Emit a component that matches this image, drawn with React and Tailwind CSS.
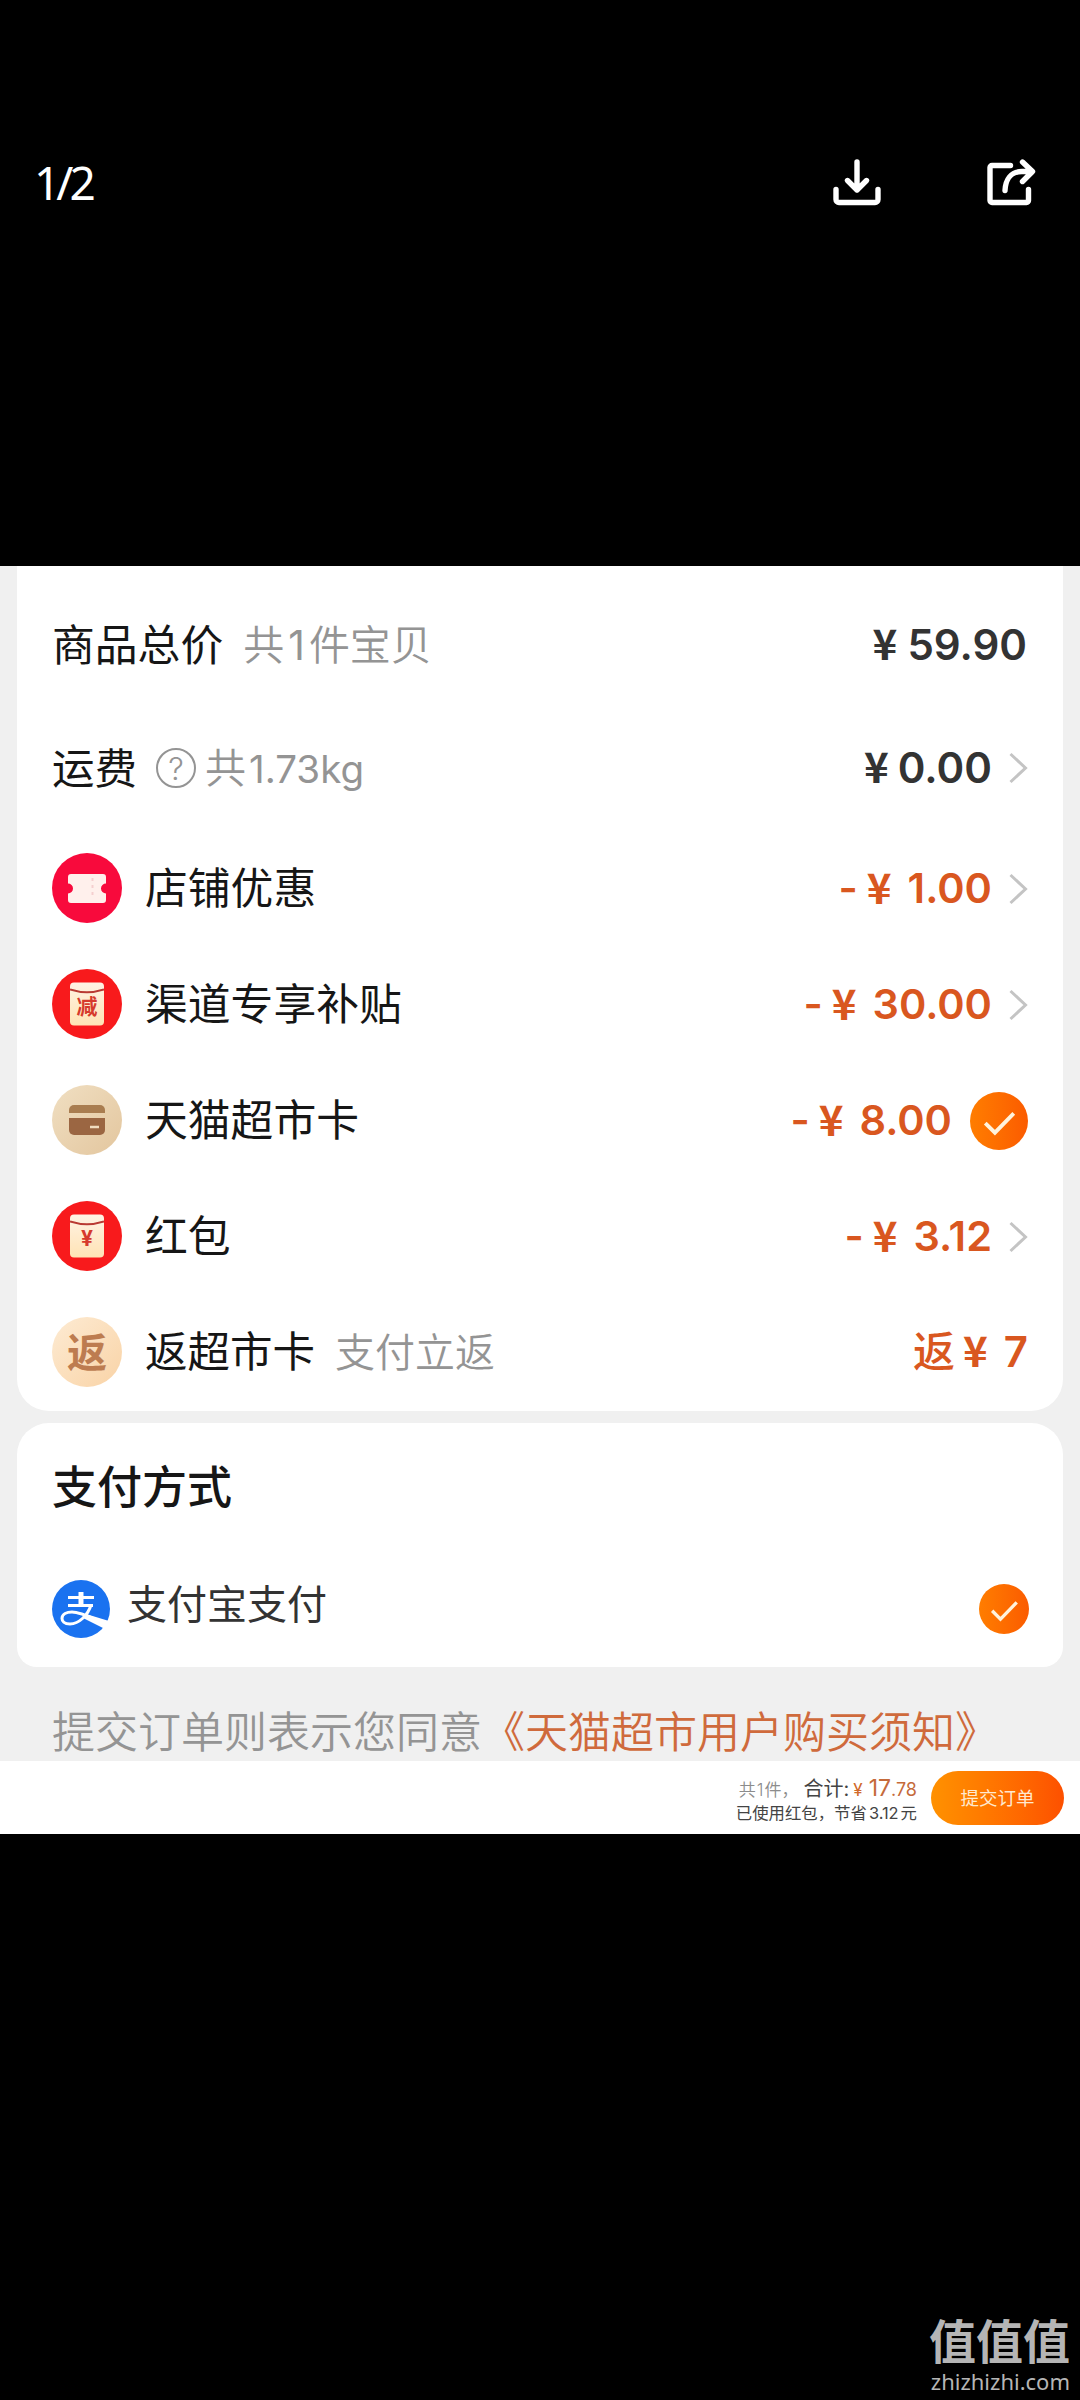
import clsx from 'clsx';

const discounts = [
  { label: '店铺优惠', icon: 'coupon', amount: '1.00', end: 'arrow' },
  { label: '渠道专享补贴', icon: 'subsidy', amount: '30.00', end: 'arrow' },
  { label: '天猫超市卡', icon: 'card', amount: '8.00', end: 'check' },
  { label: '红包', icon: 'redpack', amount: '3.12', end: 'arrow' },
];

function DownloadIcon() {
  return (
    <svg className="h-[56px] w-[56px]" viewBox="0 0 56 56" fill="none" stroke="white" strokeWidth="5.4" strokeLinecap="round" strokeLinejoin="round">
      <path d="M28 9V37M18.5 27.5L28 37l9.5-9.5M7 36.500v10a3 3 0 0 0 3 3h36a3 3 0 0 0 3-3v-10" />
    </svg>
  );
}

function ShareIcon() {
  return (
    <svg className="h-[56px] w-[56px]" viewBox="0 0 56 56" fill="none" stroke="white" strokeWidth="5.4" strokeLinecap="round" strokeLinejoin="round">
      <path d="M27.500 12.500H9a2 2 0 0 0-2 2V47.500a2 2 0 0 0 2 2H43.500a2 2 0 0 0 2-2V36.500" />
      <path d="M22 37.500c.5-11 6-19 17-19h8M39.500 9L49.500 18.500 39.500 28.500" />
    </svg>
  );
}

function Arrow() {
  return (
    <svg className="ml-[16px] h-[32px] w-[20px]" viewBox="0 0 20 32" fill="none" stroke="#c4c4c4" strokeWidth="3">
      <path d="M2.500 2L17.500 16 2.500 30" />
    </svg>
  );
}

function Check({ className }) {
  return (
    <span className={clsx('flex items-center justify-center rounded-full bg-gradient-to-r from-[#ff7d00] to-[#fb5b00]', className)}>
      <svg className="h-full w-full" viewBox="0 0 57 57" fill="none" stroke="#fff3dc" strokeWidth="3.8">
        <path d="M15 30.500L24.500 40 43 21" />
      </svg>
    </span>
  );
}

function Packet({ children }) {
  return (
    <span className="relative flex h-[70px] w-[70px] items-center justify-center rounded-full bg-[#f81a1c]">
      <svg className="h-[44px] w-[34px]" viewBox="0 0 34 44">
        <defs>
          <linearGradient id="packet" x1="0" y1="0" x2="0" y2="1">
            <stop offset="0" stopColor="#fff3e4" />
            <stop offset="1" stopColor="#ffe3b5" />
          </linearGradient>
        </defs>
        <rect width="34" height="43" y="0.500" rx="4" fill="url(#packet)" />
        <path d="M0 7.500Q17 13 34 7.500" fill="none" stroke="#b93a33" strokeWidth="2" />
      </svg>
      <span className="absolute inset-x-0 top-[27px] text-center text-[21px] leading-[22px] font-bold text-[#d63a2c]">{children}</span>
    </span>
  );
}

function RowIcon({ name }) {
  if (name === 'coupon') {
    return (
      <span className="flex h-[70px] w-[70px] items-center justify-center rounded-full bg-[#f80a3c]">
        <svg className="h-[29px] w-[38px]" viewBox="0 0 38 29">
          <path d="M3 0h32a3 3 0 0 1 3 3v6.500a5 5 0 0 0 0 10v6.500a3 3 0 0 1-3 3H3a3 3 0 0 1-3-3v-6.500a5 5 0 0 0 0-10V3a3 3 0 0 1 3-3z" fill="#fff0ec" />
          <path d="M24.500 4v21" stroke="#f5cfcf" strokeWidth="2" strokeDasharray="3 4" />
        </svg>
      </span>
    );
  }
  if (name === 'card') {
    return (
      <span className="flex h-[70px] w-[70px] items-center justify-center rounded-full bg-gradient-to-br from-[#f0dfc2] to-[#e3c69e]">
        <svg className="h-[30px] w-[36px]" viewBox="0 0 36 30">
          <path d="M5 0h26a5 5 0 0 1 5 5v3H0V5a5 5 0 0 1 5-5z" fill="#a97d50" />
          <path d="M0 13h36v12a5 5 0 0 1-5 5H5a5 5 0 0 1-5-5z" fill="#9b6642" />
          <path d="M21 22h9" stroke="#f0dcc0" strokeWidth="2.5" />
        </svg>
      </span>
    );
  }
  if (name === 'rebate') {
    return (
      <span className="flex h-[70px] w-[70px] items-center justify-center rounded-full bg-gradient-to-br from-[#fdebd3] to-[#f9d3a6] pt-[2px] text-[40px] leading-none font-bold text-[#bd7c50]">
        返
      </span>
    );
  }
  return <Packet>{name === 'subsidy' ? '减' : '¥'}</Packet>;
}

function Yen({ className }) {
  return <span className={clsx("pb-[6px] font-['Noto_Sans_CJK_SC'] text-[42px] font-bold", className)}>¥</span>;
}

export default function App() {
  return (
    <div className="flex h-[2400px] w-[1080px] flex-col overflow-hidden bg-black font-['Inter','Noto_Sans_CJK_SC',sans-serif] leading-none whitespace-nowrap text-[#161616]">
      <header className="flex h-[566px] items-start justify-between pt-[153px] pr-[41px] pl-[34px]">
        <span className="pt-[6px] font-['Noto_Sans'] text-[46px] tracking-[-4px] text-white">1/2</span>
        <div className="flex gap-[98px]">
          <DownloadIcon />
          <ShareIcon />
        </div>
      </header>

      <main className="flex h-[1268px] flex-col bg-[#f0f0f0]">
        <section className="mx-[17px] h-[845px] rounded-b-[32px] bg-white pt-[18px] pr-[35px] pl-[35px]">
          <div className="flex h-[122px] items-center">
            <span className="pt-[2px] text-[42.800px]">商品总价</span>
            <span className="ml-[20px] pt-[1px] text-[41px] font-[350] text-[#949494]">共<span className="mx-[4px] font-normal">1</span>件宝贝</span>
            <div className="ml-auto flex items-center pr-[1px] text-[42px] font-semibold text-[#333]">
              <Yen className="mr-[10px]" />59.90
            </div>
          </div>
          <div className="flex h-[124px] items-center">
            <span className="pt-[2px] text-[42.500px]">运费</span>
            <span className="ml-[19px] flex h-[40px] w-[40px] items-center justify-center rounded-full border-[2.500px] border-[#949494] text-[31px] font-light text-[#949494]">?</span>
            <span className="ml-[9px] pt-[1px] text-[41px] font-[350] text-[#949494]">共<span className="ml-[3px] text-[38.500px] font-normal">1.73kg</span></span>
            <div className="ml-auto flex items-center text-[42px] font-semibold text-[#333]">
              <Yen className="mr-[9px]" />0.00
              <Arrow />
            </div>
          </div>

          {discounts.map((item) => (
            <div key={item.label} className="flex h-[116px] items-center">
              <RowIcon name={item.icon} />
              <span className="ml-[23px] pt-[2px] text-[42.800px]">{item.label}</span>
              <div className="ml-auto flex items-center pt-[1px] text-[41.500px] font-semibold text-[#d9571f]">
                <span className="mr-[9px]">-</span>
                <Yen className="mr-[16px]" />
                {item.amount}
                {item.end === 'arrow' ? <Arrow /> : <Check className="ml-[18px] h-[58px] w-[58px]" />}
              </div>
            </div>
          ))}

          <div className="flex h-[116px] items-center">
            <RowIcon name="rebate" />
            <span className="ml-[23px] pt-[1px] text-[42.500px]">返超市卡</span>
            <span className="ml-[20px] pt-[1px] text-[40px] font-[350] text-[#949494]">支付立返</span>
            <div className="ml-auto flex items-center text-[42px] font-semibold text-[#d9571f]">
              <span className="font-medium">返</span><Yen className="mr-[16px] ml-[8px]" />7
            </div>
          </div>
        </section>

        <section className="mx-[17px] mt-[12px] h-[244px] rounded-t-[32px] rounded-b-[20px] bg-white pr-[35px] pl-[35px]">
          <h2 className="flex h-[128px] items-center pt-[1px] text-[45px] font-medium">支付方式</h2>
          <div className="flex h-[116px] items-center">
            <svg className="h-[58px] w-[58px]" viewBox="0 0 58 58">
              <circle cx="29" cy="29" r="29" fill="#1a72f0" />
              <g fill="none" stroke="white">
                <path d="M16 17.500H42M16 25.500H41" strokeWidth="3" />
                <path d="M29 12V25" strokeWidth="5" />
                <path d="M39 25C36 35 27 44 18 44c-6 0-8-3-8-5.500C10 34 15 32 20 32c9 0 20 6 37 13" strokeWidth="3" />
              </g>
              <path d="M34 34l23 7-4 8-22-11z" fill="white" />
            </svg>
            <span className="ml-[17px] pb-[8px] text-[40px] text-[#333]">支付宝支付</span>
            <Check className="mr-[-1px] ml-auto h-[50px] w-[50px]" />
          </div>
        </section>

        <p className="flex flex-1 items-center pt-[36px] pl-[52px] text-[43px] font-[350] text-[#949494]">
          提交订单则表示您同意<span className="text-[#cf6a3c]">《天猫超市用户购买须知》</span>
        </p>

        <footer className="flex h-[73px] items-center justify-end bg-white pr-[16px]">
          <div className="flex flex-col items-end gap-[5px] pt-[3px]">
            <div className="flex items-baseline text-[#444]">
              <span className="text-[17px] font-[350] text-[#8c8c8c]">共<span className="mx-[1px]">1</span>件，</span>
              <span className="ml-[5px] text-[20px]">合计:</span>
              <span className="ml-[4px] text-[17px] text-[#d0692c]">¥</span>
              <span className="ml-[6px] text-[23px] text-[#c56a3a]">17<span className="text-[18px]">.78</span></span>
            </div>
            <span className="text-[16.400px] text-[#444]">已使用红包，节省<span className="mx-[2px]">3.12</span>元</span>
          </div>
          <button className="ml-[14px] h-[54px] w-[133px] rounded-full bg-gradient-to-r from-[#ff9100] to-[#fd5000] pt-[1px] text-[18.500px] text-[#ffe9cf]">提交订单</button>
        </footer>
      </main>

      <div className="mt-auto flex flex-col items-end pr-[10px] pb-[5px] text-[#b5b5b5]">
        <span className="text-[47px] leading-[50px] font-bold">值值值</span>
        <span className="font-['Noto_Sans'] text-[22px] leading-[28px]">zhizhizhi.com</span>
      </div>
    </div>
  );
}
